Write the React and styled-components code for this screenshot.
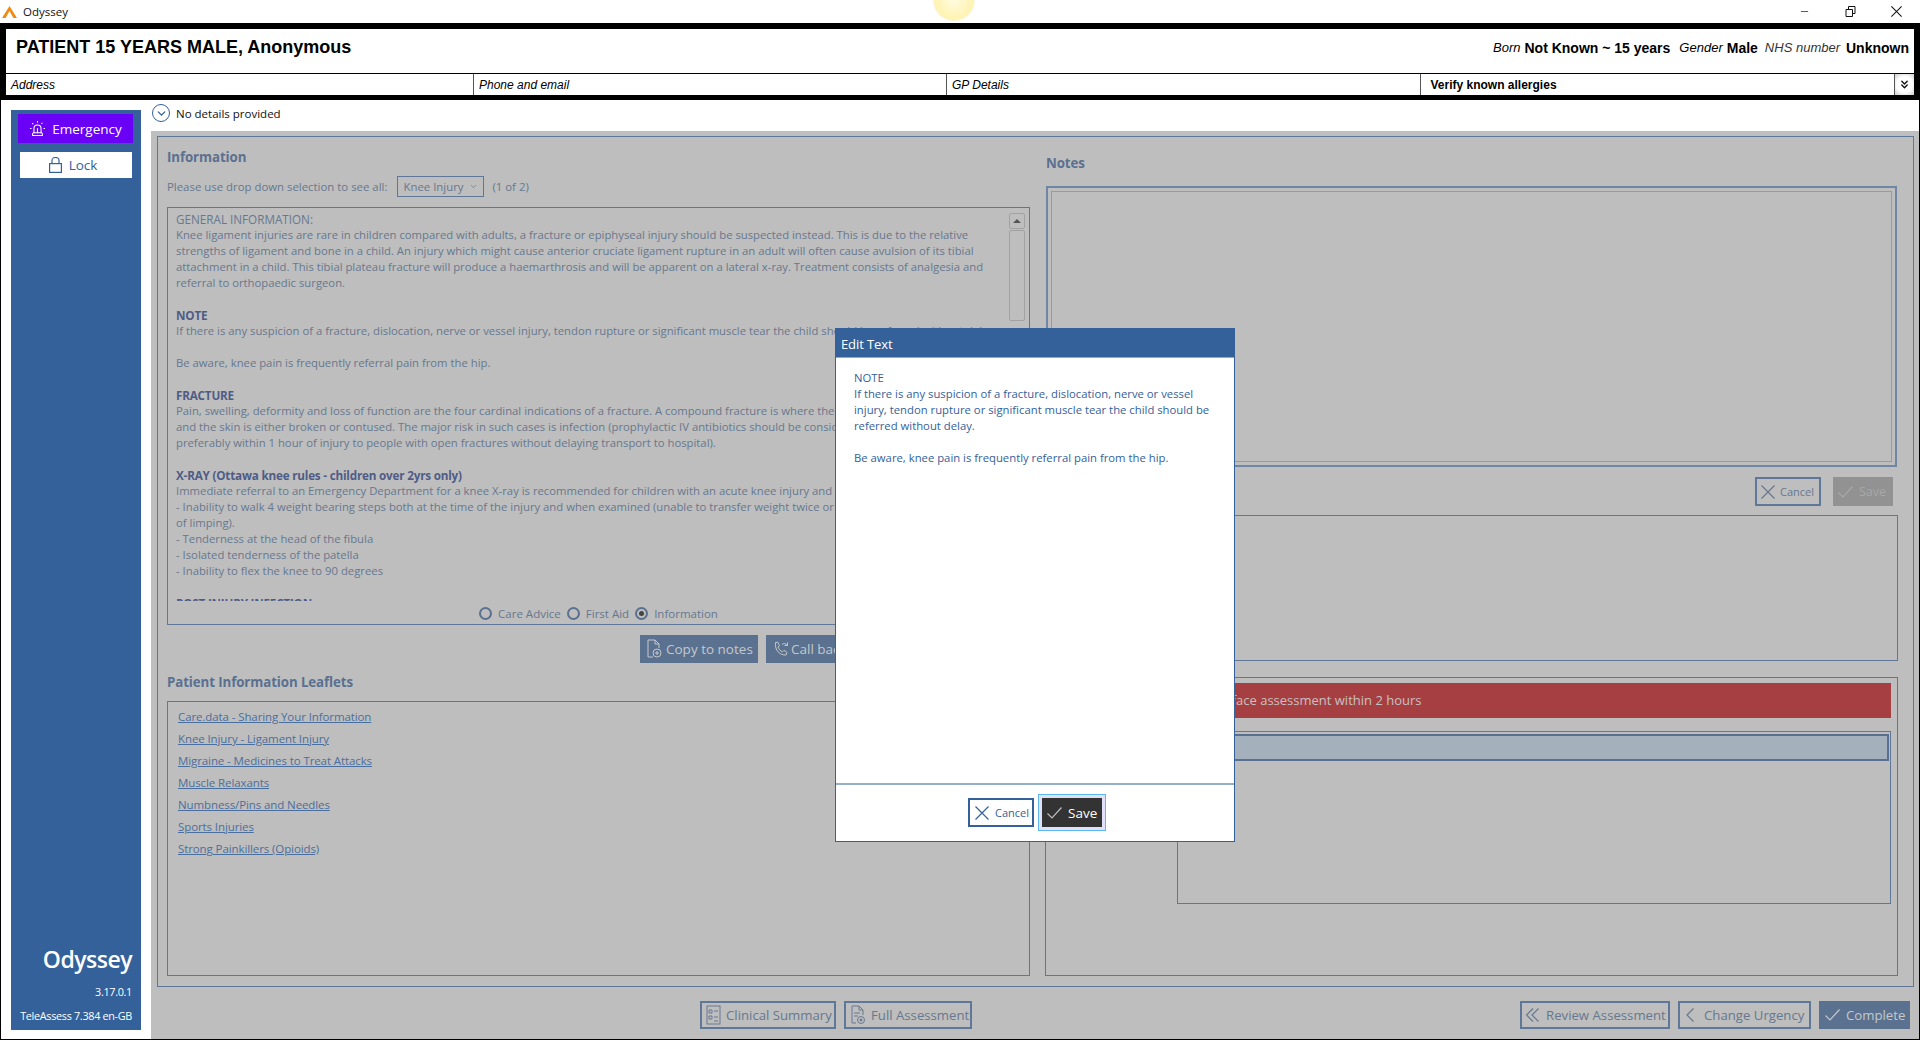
import React from "react";
import styled, { createGlobalStyle } from "styled-components";
import { Siren, ChevronDown, ChevronsDown, Minus } from "lucide-react";

const Global = createGlobalStyle`
  html, body { margin: 0; padding: 0; background: #fff; overflow: hidden; }
  * { box-sizing: border-box; }
  body { font-family: "Open Sans", "Noto Sans", sans-serif; }
`;

const ui = `"Open Sans", "Noto Sans", sans-serif`;
const muted = "#66788f";
const line = "#5f7799";
const blue = "#34619a";
const grey = "#bebebe";

const Page = styled.div`
  width: 1920px; height: 1040px; display: flex; flex-direction: column; position: relative; overflow: hidden;
`;
const TitleBar = styled.div`
  height: 23px; flex: none; display: flex; align-items: center; padding-left: 2px; background: #fff; color: #111;
  font: 11.5px ${ui};
`;
const AppName = styled.span` margin-left: 6px; flex: 1; `;
const WinBtn = styled.span`
  width: 46px; display: flex; justify-content: center; align-items: center; color: #111;
`;
const WinControls = styled.div` display: flex; padding-right: 1px; `;
const Glow = styled.div`
  position: absolute; left: 934px; top: -20px; width: 40px; height: 40px; border-radius: 50%;
  background: radial-gradient(circle, #fffbe0 0%, #fff3b0 70%, #f6e48a 100%);
  box-shadow: 0 0 2px #e8d890;
`;
const PatientFrame = styled.div`
  flex: none; height: 77px; border: solid #000; border-width: 6px 6px 5px 6px; background: #fff;
  display: flex; flex-direction: column;
`;
const PatientTop = styled.div`
  height: 45px; flex: none; display: flex; justify-content: space-between; padding: 6px 5px 0 10px;
  border-bottom: 1px solid #000; font-family: "Liberation Sans", Arial, sans-serif; color: #000;
`;
const PatientName = styled.div` font-size: 18px; font-weight: 700; line-height: 24px; `;
const PatientMeta = styled.div`
  font-size: 14px; line-height: 26px; display: flex; gap: 4px; white-space: pre;
`;
const MetaLabel = styled.i`
  font-weight: 400; color: ${p => p.$c || "#000"}; font-size: 13px; margin-right: ${p => p.$gap || 0}px;
`;
const MetaValue = styled.b` margin-right: ${p => p.$gap || 0}px; `;
const PatientRow = styled.div`
  height: 21px; flex: none; display: grid; grid-template-columns: 468px 473px 473.5px 1fr 19px; grid-template-rows: 21px;
  font: 12px/22px "Liberation Sans", Arial, sans-serif; color: #000;
`;
const PatientCell = styled.div`
  padding-left: ${p => p.$pad || 5}px; border-right: 1px solid #555; font-style: ${p => p.$bold ? "normal" : "italic"};
  font-weight: ${p => p.$bold ? 700 : 400};
`;
const ExpandCell = styled.div`
  display: flex; align-items: center; justify-content: center; color: #111;
  background: radial-gradient(circle, #fff 55%, #ccc 100%);
`;
const Main = styled.div`
  flex: 1; min-height: 0; display: flex; background: #fff;
  border: solid #000; border-width: 0 1px 1px 1px;
`;
const Sidebar = styled.aside`
  width: 130px; margin: 10px 10px 9px 10px; background: ${blue}; color: #fff; display: flex; flex-direction: column;
  padding: 4px 9px 0 7px;
`;
const EmergencyBtn = styled.div`
  height: 29px; width: 115px; background: #6a00f5; display: flex; align-items: center; justify-content: center; gap: 6px;
  font: 13.5px ${ui};
`;
const LockBtn = styled.div`
  height: 26px; margin: 9px 0 0 2px; background: #fff; color: ${blue}; display: flex; align-items: center;
  justify-content: center; gap: 7px; padding-right: 6px; font: 13.5px ${ui};
`;
const Brand = styled.div`
  font: 600 23px/30px ${ui}; text-align: right; letter-spacing: -0.5px;
`;
const Version = styled.div`
  font: 10.8px/14px ${ui}; text-align: right; margin-top: ${p => p.$mt}px; white-space: nowrap; letter-spacing: -0.3px;
`;
const SideFoot = styled.div` padding-bottom: 7px; margin-top: auto; `;
const Content = styled.div` flex: 1; min-width: 0; display: flex; flex-direction: column; `;
const DetailsBar = styled.div`
  height: 31px; flex: none; display: flex; align-items: center; gap: 6px; padding: 0 0 5px 1px; font: 11.5px ${ui}; color: #111;
`;
const RoundBtn = styled.span`
  width: 18px; height: 18px; border-radius: 50%; border: 1px solid ${blue}; color: ${blue}; display: flex;
  align-items: center; justify-content: center;
`;
const GreyArea = styled.div`
  flex: 1; min-height: 0; background: ${grey}; padding: 5px 5px 0 6px; display: flex; flex-direction: column;
`;
const Panel = styled.div`
  height: 851px; flex: none; border: 1px solid ${line}; display: grid;
  grid-template-columns: 863px 853px; column-gap: 15px; padding: 0 0 10px 9px;
`;
const Col = styled.div` display: flex; flex-direction: column; min-height: 0; `;
const SectionTitle = styled.h2`
  margin: ${p => p.$mt}px 0 0 ${p => p.$ml || 0}px; font: 700 13.3px/18px ${ui}; color: #5a7090; letter-spacing: -0.1px;
`;
const SelectRow = styled.div`
  margin-top: 10px; height: 21px; display: flex; align-items: center; font: 11.4px ${ui}; color: ${muted}; white-space: nowrap;
`;
const SelectBox = styled.div`
  width: 87px; height: 21px; margin: 0 8px 0 10px; border: 1px solid ${line}; display: flex; align-items: center;
  justify-content: space-between; padding: 0 5px;
`;
const InfoBox = styled.div`
  margin-top: 10px; height: 418px; flex: none; border: 1px solid ${line}; position: relative; display: flex; flex-direction: column;
`;
const InfoText = styled.div`
  height: 393px; flex: none; overflow: hidden; padding: 3px 0 0 8px; font: 11.3px/16px ${ui}; color: ${muted}; white-space: nowrap;
`;
const InfoLine = styled.div` min-height: 16px; `;
const InfoCaps = styled(InfoLine)` font-size: 11.7px; `;
const InfoHead = styled(InfoLine)` font-size: 11.7px; font-weight: 700; color: #4f5c86; letter-spacing: -0.2px; `;
const ScrollBar = styled.div`
  position: absolute; right: 4px; top: 5px; width: 16px; display: flex; flex-direction: column; gap: 1px;
`;
const ScrollUp = styled.div`
  height: 16px; border: 1px solid #a2a2a2; border-radius: 2px; display: flex; align-items: center; justify-content: center;
  &::before { content: ""; border: solid transparent; border-width: 0 4px 4px 4px; border-bottom-color: #555; }
`;
const ScrollThumb = styled.div` height: 91px; border: 1px solid #a2a2a2; border-radius: 2px; `;
const RadioRow = styled.div`
  flex: 1; display: flex; justify-content: center; align-items: center; padding-top: 2px; font: 11.5px ${ui}; color: ${muted};
`;
const Radio = styled.span`
  width: 13px; height: 13px; border-radius: 50%; border: 2px solid #5a7090; margin: 0 6px 0 ${p => p.$ml || 0}px; display: flex;
  align-items: center; justify-content: center;
  &::after { content: ""; width: 5px; height: 5px; border-radius: 50%; background: ${p => p.$on ? "#444" : "transparent"}; }
`;
const ActionRow = styled.div` margin-top: 10px; height: 28px; display: flex; gap: 8px; padding-left: 473px; `;
const SolidBtn = styled.div`
  height: 28px; width: ${p => p.$w}px; background: #5a7190; color: #c4c8cc; display: flex; align-items: center; gap: ${p => p.$gap || 4}px; padding-left: 6px;
  font: ${p => p.$fs || 13.5}px ${ui}; white-space: nowrap; overflow: hidden;
`;
const LeafletBox = styled.div`
  margin-top: 10px; flex: 1; border: 1px solid ${line}; padding: 4px 0 0 10px; display: flex; flex-direction: column;
`;
const LeafletLink = styled.a`
  font: 11.5px/22px ${ui}; color: #4a6f9f; text-decoration: underline; align-self: flex-start; letter-spacing: -0.1px;
`;
const NotesBox = styled.div`
  margin: 14px 1px 0; height: 281px; flex: none; border: 2px solid #6f86a6; padding: 3px;
`;
const NotesInner = styled.div` height: 100%; border: 1px solid #9a9a9a; `;
const NotesActions = styled.div`
  margin-top: 10px; height: 29px; flex: none; display: flex; justify-content: flex-end; gap: 12px; padding-right: 5px;
`;
const OutlineBtn = styled.div`
  height: ${p => p.$h || 28}px; width: ${p => p.$w}px; border: 2px solid ${p => p.$c || "#5f7799"}; display: flex; align-items: center; gap: ${p => p.$gap || 5}px;
  padding-left: ${p => p.$pl || 4}px; font: ${p => p.$fs || 13.2}px ${ui}; color: ${p => p.$tc || muted}; white-space: nowrap; background: ${p => p.$bg || "transparent"};
`;
const DisabledBtn = styled.div`
  width: 60px; height: 29px; background: #929292; color: #a8a8a8; display: flex; align-items: center; gap: 6px; padding-left: 5px; font: 12.5px ${ui};
`;
const PlainBox = styled.div` margin-top: 9px; height: 146px; flex: none; border: 1px solid ${line}; `;
const OutcomeBox = styled.div`
  margin-top: 16px; flex: 1; border: 1px solid ${line}; padding: 5px 6px 0 6px; display: flex; flex-direction: column;
`;
const RedBar = styled.div`
  height: 35px; flex: none; background: #a63f42; color: #c9c0c0; font: 13px/35px ${ui}; padding-left: 133px; white-space: nowrap;
`;
const OutcomeList = styled.div`
  margin: 13px 0 0 125px; height: 173px; flex: none; border: 1px solid ${line}; padding: 2px 1px 0 0;
`;
const OutcomeRow = styled.div` height: 27px; background: #a4b0bc; border: 2px solid #5a7090; `;
const Footer = styled.div`
  flex: 1; display: flex; align-items: flex-start; padding: 14px 3px 0 543px;
`;
const FootGroup = styled.div` display: flex; gap: ${p => p.$gap}px; margin-left: ${p => p.$ml || 0}px; `;

const Overlay = styled.div`
  position: absolute; left: 835px; top: 328px; width: 400px; height: 514px; background: #fff; border: 1px solid ${blue};
  display: flex; flex-direction: column; z-index: 5;
`;
const ModalHead = styled.div`
  height: 29px; flex: none; background: ${blue}; color: #fff; font: 13px/30px ${ui}; padding-left: 5px; border-bottom: 1px solid #8fa9c9; letter-spacing: -0.1px;
`;
const ModalBody = styled.div`
  flex: 1; padding: 12px 0 0 18px; font: 11.3px/16px ${ui}; color: ${blue};
`;
const ModalFoot = styled.div`
  height: 58px; flex: none; border-top: 2px solid #94afcb; display: flex; justify-content: center; align-items: flex-start; gap: 4px; padding: 9px 0 0 4px;
`;
const CancelWrap = styled.div` padding-top: 4px; `;
const FocusRing = styled.div`
  border: 1px solid #5cb8ee; padding: 3px; background: #e0e0fa;
`;
const SaveBtn = styled.div`
  width: 60px; height: 29px; background: #333; color: #fff; display: flex; align-items: center; gap: 6px; padding-left: 5px; font: 13.5px ${ui};
`;

const Logo = () => (
  <svg width="15" height="12" viewBox="0 0 15 12"><path d="M7.5 0 15 12h-3.6L7.5 5 3.6 12H0z" fill="#f08a12"/></svg>
);
const RestoreIcon = () => (
  <svg width="11" height="11" viewBox="0 0 11 11" fill="none" stroke="#111"><path d="M1 3.5h6.5v7H1zM3.5 3.5V.5H10v7H7.5"/></svg>
);
const CrossIcon = ({ size = 14, w = 1.2 }) => (
  <svg width={size} height={size} viewBox="0 0 14 14" fill="none" stroke="currentColor" strokeWidth={w}><path d="M.5.5l13 13M13.5.5l-13 13"/></svg>
);
const TickIcon = ({ color = "currentColor" }) => (
  <svg width="15" height="12" viewBox="0 0 15 12" fill="none" stroke={color} strokeWidth="1.2"><path d="M.5 6.500l4.500 4.500L14.500.5"/></svg>
);
const DoubleLeft = () => (
  <svg width="13" height="14" viewBox="0 0 13 14" fill="none" stroke="currentColor" strokeWidth="1.2"><path d="M7 .5.5 7 7 13.500M12.500.5 6 7l6.500 6.500"/></svg>
);
const SingleLeft = () => (
  <svg width="8" height="14" viewBox="0 0 8 14" fill="none" stroke="currentColor" strokeWidth="1.2"><path d="M7.500.5 1 7l6.500 6.500"/></svg>
);
const LockIcon = () => (
  <svg width="13" height="16" viewBox="0 0 13 16" fill="none" stroke="currentColor" strokeWidth="1.2"><rect x=".6" y="6.600" width="11.800" height="8.800"/><path d="M3 6.500V3.500a3.500 3 0 0 1 7 0v3"/></svg>
);
const CopyIcon = () => (
  <svg width="16" height="20" viewBox="0 0 16 20" fill="none" stroke="currentColor"><path d="M9 1H2v17h5M9 1l4 4v4M9 1v4h4"/><circle cx="11" cy="14" r="4"/><path d="M11 12v4M9 14h4"/></svg>
);
const CallIcon = () => (
  <svg width="18" height="18" viewBox="0 0 18 18" fill="none" stroke="currentColor"><path d="M3 3l2.500-1 2 3.500L6 7c.6 2 2.400 4 4.500 4.800l1.500-1.500 3 2.200-1 2.500c-6 .5-11.500-5-10.500-12z"/><path d="M10 4.500a3 3 0 0 1 5 1M15.500 2.500v3h-3"/></svg>
);
const SummaryIcon = () => (
  <svg width="15" height="20" viewBox="0 0 15 20" fill="none" stroke="currentColor"><rect x="1" y="1" width="13" height="18"/><path d="M3 5h3v3H3zM3 11h3v3H3zM8 6h4M8 12h4M8 16h4"/></svg>
);
const FullIcon = () => (
  <svg width="16" height="20" viewBox="0 0 16 20" fill="none" stroke="currentColor"><path d="M9 1H2v17h4M9 1l4 4v5M9 1v4h4M4 8h6M4 11h4"/><circle cx="11" cy="15" r="3.500"/><circle cx="11" cy="15" r="1" fill="currentColor"/></svg>
);

const infoLines = [
  ["c", "GENERAL INFORMATION:"],
  ["", "Knee ligament injuries are rare in children compared with adults, a fracture or epiphyseal injury should be suspected instead. This is due to the relative"],
  ["", "strengths of ligament and bone in a child. An injury which might cause anterior cruciate ligament rupture in an adult will often cause avulsion of its tibial"],
  ["", "attachment in a child. This tibial plateau fracture will produce a haemarthrosis and will be apparent on a lateral x-ray. Treatment consists of analgesia and"],
  ["", "referral to orthopaedic surgeon."],
  ["", ""],
  ["h", "NOTE"],
  ["", "If there is any suspicion of a fracture, dislocation, nerve or vessel injury, tendon rupture or significant muscle tear the child should be referred without delay."],
  ["", ""],
  ["", "Be aware, knee pain is frequently referral pain from the hip."],
  ["", ""],
  ["h", "FRACTURE"],
  ["", "Pain, swelling, deformity and loss of function are the four cardinal indications of a fracture. A compound fracture is where the bone"],
  ["", "and the skin is either broken or contused. The major risk in such cases is infection (prophylactic IV antibiotics should be considered)"],
  ["", "preferably within 1 hour of injury to people with open fractures without delaying transport to hospital)."],
  ["", ""],
  ["h", "X-RAY (Ottawa knee rules - children over 2yrs only)"],
  ["", "Immediate referral to an Emergency Department for a knee X-ray is recommended for children with an acute knee injury and"],
  ["", "- Inability to walk 4 weight bearing steps both at the time of the injury and when examined (unable to transfer weight twice or"],
  ["", "of limping)."],
  ["", "- Tenderness at the head of the fibula"],
  ["", "- Isolated tenderness of the patella"],
  ["", "- Inability to flex the knee to 90 degrees"],
  ["", ""],
  ["h", "POST INJURY INFECTION"],
];

const leaflets = [
  "Care.data - Sharing Your Information",
  "Knee Injury - Ligament Injury",
  "Migraine - Medicines to Treat Attacks",
  "Muscle Relaxants",
  "Numbness/Pins and Needles",
  "Sports Injuries",
  "Strong Painkillers (Opioids)",
];

export default function App() {
  return (
    <Page>
      <Global />
      <TitleBar>
        <Logo />
        <AppName>Odyssey</AppName>
        <WinControls>
          <WinBtn><Minus size={11} strokeWidth={1.5} /></WinBtn>
          <WinBtn><RestoreIcon /></WinBtn>
          <WinBtn><CrossIcon size={11} w={1.3} /></WinBtn>
        </WinControls>
      </TitleBar>
      <Glow />
      <PatientFrame>
        <PatientTop>
          <PatientName>PATIENT 15 YEARS MALE, Anonymous</PatientName>
          <PatientMeta>
            <MetaLabel>Born</MetaLabel><MetaValue $gap={5}>Not Known ~ 15 years</MetaValue>
            <MetaLabel>Gender</MetaLabel><MetaValue $gap={3}>Male</MetaValue>
            <MetaLabel $c="#333" $gap={2}>NHS number</MetaLabel><MetaValue>Unknown</MetaValue>
          </PatientMeta>
        </PatientTop>
        <PatientRow>
          <PatientCell>Address</PatientCell>
          <PatientCell>Phone and email</PatientCell>
          <PatientCell>GP Details</PatientCell>
          <PatientCell $bold $pad={10}>Verify known allergies</PatientCell>
          <ExpandCell><ChevronsDown size={13} strokeWidth={2.5} /></ExpandCell>
        </PatientRow>
      </PatientFrame>
      <Main>
        <Sidebar>
          <EmergencyBtn><Siren size={17} strokeWidth={1.5} />Emergency</EmergencyBtn>
          <LockBtn><LockIcon />Lock</LockBtn>
          <SideFoot>
            <Brand>Odyssey</Brand>
            <Version $mt={11}>3.17.0.1</Version>
            <Version $mt={10}>TeleAssess 7.384 en-GB</Version>
          </SideFoot>
        </Sidebar>
        <Content>
          <DetailsBar>
            <RoundBtn><ChevronDown size={13} strokeWidth={2.5} /></RoundBtn>
            No details provided
          </DetailsBar>
          <GreyArea>
            <Panel>
              <Col>
                <SectionTitle $mt={11}>Information</SectionTitle>
                <SelectRow>
                  Please use drop down selection to see all:
                  <SelectBox>Knee Injury <ChevronDown size={9} strokeWidth={2} /></SelectBox>
                  (1 of 2)
                </SelectRow>
                <InfoBox>
                  <InfoText>
                    {infoLines.map(([kind, text], i) =>
                      kind === "h" ? <InfoHead key={i}>{text}</InfoHead>
                        : kind === "c" ? <InfoCaps key={i}>{text}</InfoCaps>
                        : <InfoLine key={i}>{text}</InfoLine>
                    )}
                  </InfoText>
                  <ScrollBar><ScrollUp /><ScrollThumb /></ScrollBar>
                  <RadioRow>
                    <Radio />Care Advice
                    <Radio $ml={6} />First Aid
                    <Radio $ml={6} $on />Information
                  </RadioRow>
                </InfoBox>
                <ActionRow>
                  <SolidBtn $w={118}><CopyIcon />Copy to notes</SolidBtn>
                  <SolidBtn $w={110} $gap={1}><CallIcon />Call back</SolidBtn>
                </ActionRow>
                <SectionTitle $mt={10}>Patient Information Leaflets</SectionTitle>
                <LeafletBox>
                  {leaflets.map(l => <LeafletLink key={l}>{l}</LeafletLink>)}
                </LeafletBox>
              </Col>
              <Col>
                <SectionTitle $mt={17} $ml={1}>Notes</SectionTitle>
                <NotesBox><NotesInner /></NotesBox>
                <NotesActions>
                  <OutlineBtn $w={66} $h={29} $fs={11} $pl={4} $gap={5}><CrossIcon />Cancel</OutlineBtn>
                  <DisabledBtn><TickIcon />Save</DisabledBtn>
                </NotesActions>
                <PlainBox />
                <OutcomeBox>
                  <RedBar>Face to face assessment within 2 hours</RedBar>
                  <OutcomeList><OutcomeRow /></OutcomeList>
                </OutcomeBox>
              </Col>
            </Panel>
            <Footer>
              <FootGroup $gap={8}>
                <OutlineBtn $w={136}><SummaryIcon />Clinical Summary</OutlineBtn>
                <OutlineBtn $w={128}><FullIcon />Full Assessment</OutlineBtn>
              </FootGroup>
              <FootGroup $gap={8} $ml={548}>
                <OutlineBtn $w={150} $gap={7} $pl={4}><DoubleLeft />Review Assessment</OutlineBtn>
                <OutlineBtn $w={133} $gap={10} $pl={6}><SingleLeft />Change Urgency</OutlineBtn>
                <SolidBtn $w={91} $gap={6} $fs={13.2}><TickIcon />Complete</SolidBtn>
              </FootGroup>
            </Footer>
          </GreyArea>
        </Content>
      </Main>
      <Overlay>
        <ModalHead>Edit Text</ModalHead>
        <ModalBody>
          <div>NOTE</div>
          <div>If there is any suspicion of a fracture, dislocation, nerve or vessel</div>
          <div>injury, tendon rupture or significant muscle tear the child should be</div>
          <div>referred without delay.</div>
          <br />
          <div>Be aware, knee pain is frequently referral pain from the hip.</div>
        </ModalBody>
        <ModalFoot>
          <CancelWrap>
            <OutlineBtn $w={66} $h={29} $c={blue} $tc={blue} $fs={11} $bg="#fff" $pl={5} $gap={6}><CrossIcon />Cancel</OutlineBtn>
          </CancelWrap>
          <FocusRing><SaveBtn><TickIcon color="#bbb" />Save</SaveBtn></FocusRing>
        </ModalFoot>
      </Overlay>
    </Page>
  );
}
